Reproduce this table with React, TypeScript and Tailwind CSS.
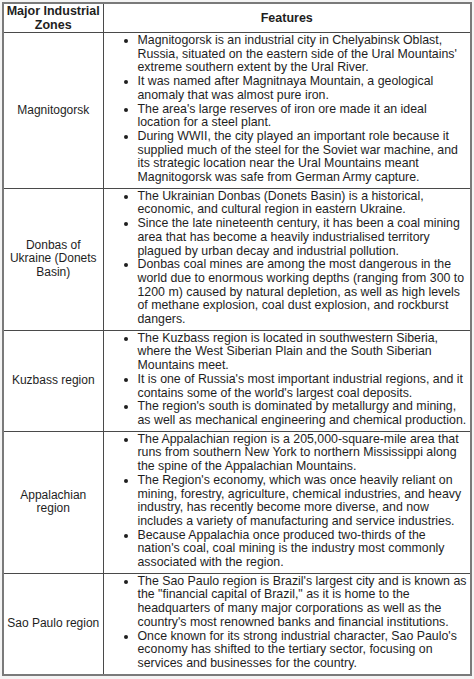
import React from "react";

type Zone = {
  name: string[];
  features: string[][];
};

// Lines are broken where the source document breaks them.
const zones: Zone[] = [
  {
    name: ["Magnitogorsk"],
    features: [
      [
        "Magnitogorsk is an industrial city in Chelyabinsk Oblast,",
        "Russia, situated on the eastern side of the Ural Mountains'",
        "extreme southern extent by the Ural River.",
      ],
      ["It was named after Magnitnaya Mountain, a geological", "anomaly that was almost pure iron."],
      ["The area's large reserves of iron ore made it an ideal", "location for a steel plant."],
      [
        "During WWII, the city played an important role because it",
        "supplied much of the steel for the Soviet war machine, and",
        "its strategic location near the Ural Mountains meant",
        "Magnitogorsk was safe from German Army capture.",
      ],
    ],
  },
  {
    name: ["Donbas of", "Ukraine (Donets", "Basin)"],
    features: [
      ["The Ukrainian Donbas (Donets Basin) is a historical,", "economic, and cultural region in eastern Ukraine."],
      [
        "Since the late nineteenth century, it has been a coal mining",
        "area that has become a heavily industrialised territory",
        "plagued by urban decay and industrial pollution.",
      ],
      [
        "Donbas coal mines are among the most dangerous in the",
        "world due to enormous working depths (ranging from 300 to",
        "1200 m) caused by natural depletion, as well as high levels",
        "of methane explosion, coal dust explosion, and rockburst",
        "dangers.",
      ],
    ],
  },
  {
    name: ["Kuzbass region"],
    features: [
      [
        "The Kuzbass region is located in southwestern Siberia,",
        "where the West Siberian Plain and the South Siberian",
        "Mountains meet.",
      ],
      [
        "It is one of Russia's most important industrial regions, and it",
        "contains some of the world's largest coal deposits.",
      ],
      [
        "The region's south is dominated by metallurgy and mining,",
        "as well as mechanical engineering and chemical production.",
      ],
    ],
  },
  {
    name: ["Appalachian", "region"],
    features: [
      [
        "The Appalachian region is a 205,000-square-mile area that",
        "runs from southern New York to northern Mississippi along",
        "the spine of the Appalachian Mountains.",
      ],
      [
        "The Region's economy, which was once heavily reliant on",
        "mining, forestry, agriculture, chemical industries, and heavy",
        "industry, has recently become more diverse, and now",
        "includes a variety of manufacturing and service industries.",
      ],
      [
        "Because Appalachia once produced two-thirds of the",
        "nation's coal, coal mining is the industry most commonly",
        "associated with the region.",
      ],
    ],
  },
  {
    name: ["Sao Paulo region"],
    features: [
      [
        "The Sao Paulo region is Brazil's largest city and is known as",
        "the \"financial capital of Brazil,\" as it is home to the",
        "headquarters of many major corporations as well as the",
        "country's most renowned banks and financial institutions.",
      ],
      [
        "Once known for its strong industrial character, Sao Paulo's",
        "economy has shifted to the tertiary sector, focusing on",
        "services and businesses for the country.",
      ],
    ],
  },
];

export default function App() {
  return (
    <div className="w-[474px] h-[679px] bg-[#f4f4f4] p-[2px] font-['Liberation_Sans',Arial,sans-serif] text-[#1e1e1e]">
      <table className="w-[470px] table-fixed border-collapse border-2 border-[#7a7a7a] bg-white">
        <colgroup>
          <col className="w-[100px]" />
          <col />
        </colgroup>
        <thead>
          <tr>
            <th className="border border-[#4a4a4a] px-0 py-0 text-[12.5px] leading-[14px] font-bold text-center align-middle whitespace-nowrap">
              Major Industrial
              <br />
              Zones
            </th>
            <th className="border border-[#4a4a4a] px-[2px] py-0 text-[12.5px] leading-[14px] font-bold text-center align-middle">
              Features
            </th>
          </tr>
        </thead>
        <tbody>
          {zones.map((z) => (
            <tr key={z.name.join(" ")}>
              <td className="border border-[#4a4a4a] px-[2px] text-[12px] leading-[13.7px] text-center align-middle whitespace-nowrap">
                {z.name.map((n) => (
                  <div key={n}>{n}</div>
                ))}
              </td>
              <td className="border border-[#4a4a4a] pl-[2px] pr-[2px] pt-[1px] pb-[3px] text-[12.35px] leading-[13.7px] align-top">
                <ul className="list-disc pl-[32px]">
                  {z.features.map((lines) => (
                    <li key={lines[0]}>
                      {lines.map((l) => (
                        <span key={l} className="block whitespace-nowrap">
                          {l}
                        </span>
                      ))}
                    </li>
                  ))}
                </ul>
              </td>
            </tr>
          ))}
        </tbody>
      </table>
    </div>
  );
}
